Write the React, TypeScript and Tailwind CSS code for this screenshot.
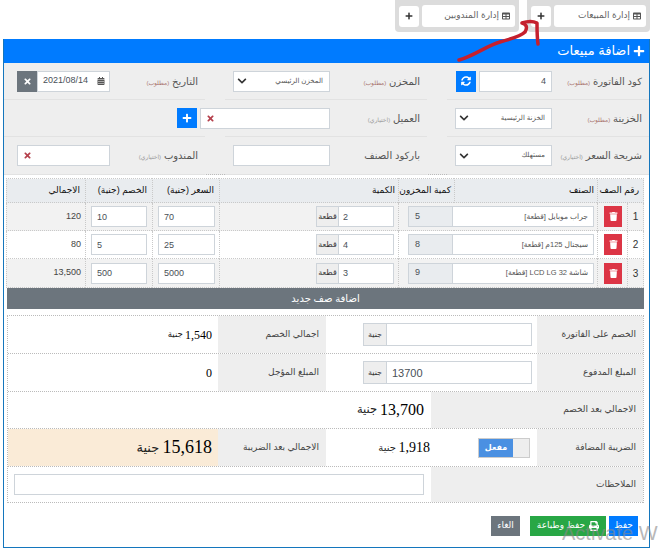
import React from "react";
import { FaPlus, FaSyncAlt, FaTrash, FaTimes, FaCalendarAlt, FaPrint, FaTable, FaChevronDown } from "react-icons/fa";

const inputCls = "h-full min-w-0 bg-white border border-[#ced4da] text-[#495057] outline-none";

function TabGroup({ label, w }: { label: string; w: string }) {
  return (
    <div className={`flex h-[32px] items-center gap-[3px] rounded-b-[4px] bg-[#dcdcdc] px-[4px] ${w}`}>
      <div className="flex h-[22px] flex-1 items-center gap-[3px] rounded-[3px] bg-white pr-[5px] text-[9px] text-[#666]">
        <FaTable className="text-[8px] text-[#555]" />
        <span>{label}</span>
      </div>
      <div className="flex h-[21px] w-[20px] items-center justify-center rounded-[3px] bg-white text-[#333]">
        <FaPlus className="text-[8px]" />
      </div>
    </div>
  );
}

function Label({ text, note, required, narrow }: { text: string; note?: string; required?: boolean; narrow?: boolean }) {
  return (
    <div className={`shrink-0 whitespace-nowrap pr-[7px] text-[10px] text-[#555] ${narrow ? "w-[95px]" : "w-[97px]"}`}>
      {text}{" "}
      {note && <span className={`text-[6px] ${required ? "text-[#a9746e]" : "text-[#999]"}`}>({note})</span>}
    </div>
  );
}

function SelectBox({ text }: { text: string }) {
  return (
    <div className="flex h-[21px] w-[97px] shrink-0 items-center justify-between border border-[#ced4da] bg-white pl-[3px] pr-[6px] text-[7px] text-[#555]">
      <span>{text}</span>
      <FaChevronDown className="text-[10px] text-[#333]" />
    </div>
  );
}

function FormCell({ children, last }: { children: React.ReactNode; last?: boolean }) {
  return (
    <div className={`flex items-center border-b border-[#e2e2e2] ${last ? "" : "ml-[20px]"}`}>{children}</div>
  );
}

function ClearField({ w }: { w: string }) {
  return (
    <div className={`flex h-[21px] shrink-0 items-center justify-end border border-[#ced4da] bg-white pl-[5px] ${w}`}>
      <FaTimes className="text-[9px] text-[#b5404c]" />
    </div>
  );
}

const rows = [
  { n: "1", name: "جراب موبايل [قطعة]", stock: "5", qty: "2", price: "70", disc: "10", total: "120", bg: "bg-[#f2f2f2]", h: "h-[28px]" },
  { n: "2", name: "سيجنال 125م [قطعة]", stock: "8", qty: "4", price: "25", disc: "5", total: "80", bg: "bg-white", h: "h-[28px]" },
  { n: "3", name: "شاشة LCD LG 32 [قطعة]", stock: "9", qty: "3", price: "5000", disc: "500", total: "13,500", bg: "bg-[#f2f2f2]", h: "h-[29px]" },
];

const td = "border border-dotted border-[#c9c9c9] p-0";
const th = "border border-dotted border-[#c9c9c9] pr-[3px] text-right text-[9px] font-normal text-[#111] whitespace-nowrap";
const tableInput = "h-[21px] border border-[#ced4da] bg-white pl-[5px] text-left text-[9px] text-[#495057] outline-none";

function SumLabel({ text, w }: { text: string; w: string }) {
  return (
    <div className={`flex shrink-0 items-center justify-start bg-[#eee] pr-[7px] text-[9px] text-[#444] ${w}`}>{text}</div>
  );
}

function Currency({ value }: { value: string }) {
  return (
    <div className="flex h-[23px] w-[169px] border border-[#ced4da]">
      <input readOnly value={value} dir="ltr" className="h-full min-w-0 flex-1 bg-white pl-[5px] text-left text-[11px] text-[#495057] outline-none" />
      <div className="flex w-[23px] shrink-0 items-center justify-center border-r border-[#ced4da] bg-[#eee] text-[8px] text-[#333]">جنية</div>
    </div>
  );
}

function Money({ value }: { value: string }) {
  return (
    <>
      <span className="whitespace-nowrap">{value}</span>
      <span className="mr-[0.25em] text-[0.72em] text-[#222]">جنية</span>
    </>
  );
}

const serif = "[font-family:'Liberation_Serif','DejaVu_Sans',serif] text-black";
const rowCls = "flex border-b border-dotted border-[#bbb]";

export default function App() {
  return (
    <div dir="rtl" className="relative h-[551px] w-[660px] overflow-hidden bg-white [font-family:'Liberation_Sans','DejaVu_Sans',sans-serif]">
      {/* Top tabs */}
      <div className="flex h-[32px] gap-[8px] pr-[10px]">
        <TabGroup label="إدارة المبيعات" w="w-[123px]" />
        <TabGroup label="إدارة المندوبين" w="w-[124px]" />
      </div>

      {/* Panel */}
      <div className="mr-[10px] mt-[7px] flex h-[509px] w-[647px] flex-col border border-t-0 border-[#1476bd]">
        <div className="flex h-[24px] shrink-0 items-center gap-[3px] bg-[#007bff] pr-[4px] text-[13px] text-white">
          <FaPlus className="text-[12px]" />
          <span>اضافة مبيعات</span>
        </div>

        {/* Form */}
        <div className="grid h-[112px] shrink-0 grid-cols-[222px_222px_201px] grid-rows-[37px_37px_38px] border-b border-dotted border-[#bbb] bg-[#eee]">
          <FormCell>
            <Label text="كود الفاتورة" note="مطلوب" required />
            <div className="flex h-[21px] w-[97px] shrink-0 gap-[3px]">
              <input readOnly value="4" className={`${inputCls} w-[73px] pr-[5px] text-right text-[9px]`} />
              <div className="flex h-full w-[20px] items-center justify-center bg-[#007bff] text-white"><FaSyncAlt className="text-[10px]" /></div>
            </div>
          </FormCell>
          <FormCell>
            <Label text="المخزن" note="مطلوب" required />
            <SelectBox text="المخزن الرئيسي" />
          </FormCell>
          <FormCell last>
            <Label text="التاريخ" note="مطلوب" required narrow />
            <div className="flex h-[21px] w-[93px] shrink-0">
              <div className="flex h-full flex-1 items-center gap-[9px] border border-[#ced4da] bg-white pr-[4px] text-[9px] text-[#495057]">
                <FaCalendarAlt className="text-[8px] text-[#555]" />
                <span dir="ltr">2021/08/14</span>
              </div>
              <div className="flex h-full w-[20px] items-center justify-center bg-[#6c757d] text-white"><FaTimes className="text-[9px]" /></div>
            </div>
          </FormCell>

          <FormCell>
            <Label text="الخزينة" note="مطلوب" required />
            <SelectBox text="الخزنة الرئيسية" />
          </FormCell>
          <FormCell>
            <Label text="العميل" note="اختياري" />
            <div className="flex shrink-0 items-center gap-[3px]">
              <ClearField w="w-[130px]" />
              <div className="flex h-[20px] w-[20px] shrink-0 items-center justify-center bg-[#007bff] text-white"><FaPlus className="text-[10px]" /></div>
            </div>
          </FormCell>
          <FormCell last><div /></FormCell>

          <FormCell>
            <Label text="شريحة السعر" note="اختياري" />
            <SelectBox text="مستهلك" />
          </FormCell>
          <FormCell>
            <Label text="باركود الصنف" />
            <input readOnly className={`${inputCls} !h-[21px] w-[97px] shrink-0`} />
          </FormCell>
          <FormCell last>
            <Label text="المندوب" note="اختياري" narrow />
            <ClearField w="w-[93px]" />
          </FormCell>
        </div>

        {/* Items table */}
        <div className="mr-[5px] mt-[3px] w-[637px] shrink-0">
          <table className="w-[637px] table-fixed border-collapse">
            <colgroup>
              <col className="w-[16px]" />
              <col className="w-[30px]" />
              <col className="w-[143px]" />
              <col className="w-[56px]" />
              <col className="w-[179px]" />
              <col className="w-[67px]" />
              <col className="w-[67px]" />
              <col className="w-[79px]" />
            </colgroup>
            <thead>
              <tr className="h-[24px] bg-[#e9ecef]">
                <th colSpan={2} className={`${th} !pr-[4px]`}>رقم الصف</th>
                <th className={th}>الصنف</th>
                <th className={th}>كمية المخزون</th>
                <th className={th}>الكمية</th>
                <th className={`${th} !pr-[5px]`}>السعر (جنية)</th>
                <th className={`${th} !pr-[5px]`}>الخصم (جنية)</th>
                <th className={th + " !pr-[5px]"}>الاجمالي</th>
              </tr>
            </thead>
            <tbody>
              {rows.map((r) => (
                <tr key={r.n} className={`${r.h} ${r.bg}`}>
                  <td className={`${td} text-center text-[10px] text-[#333]`}>{r.n}</td>
                  <td className={td}>
                    <div className="flex pr-[5px]">
                      <div className="flex h-[21px] w-[18px] items-center justify-center bg-[#dc3545] text-white"><FaTrash className="text-[9px]" /></div>
                    </div>
                  </td>
                  <td colSpan={2} className={td}>
                    <div className="flex h-[21px] pr-[3px]">
                      <div className="flex w-[142px] shrink-0 items-center overflow-hidden whitespace-nowrap border border-[#ced4da] bg-white pr-[5px] text-[7.5px] text-[#555]">{r.name}</div>
                      <div className="flex w-[44px] shrink-0 items-center justify-end border border-r-0 border-[#ced4da] bg-[#e9ecef] pl-[6px] text-[9px] text-[#495057]">{r.stock}</div>
                    </div>
                  </td>
                  <td className={td}>
                    <div className="flex h-[21px] pr-[4px]">
                      <input readOnly dir="ltr" value={r.qty} className="h-full w-[56px] border border-[#ced4da] bg-white pl-[4px] text-left text-[9px] text-[#495057] outline-none" />
                      <div className="flex w-[22px] items-center justify-center border border-r-0 border-[#ced4da] bg-[#eee] text-[8px] text-[#333]">قطعة</div>
                    </div>
                  </td>
                  <td className={td}>
                    <div className="flex pr-[4px]"><input readOnly dir="ltr" value={r.price} className={`${tableInput} w-[57px]`} /></div>
                  </td>
                  <td className={td}>
                    <div className="flex pr-[5px]"><input readOnly dir="ltr" value={r.disc} className={`${tableInput} w-[56px]`} /></div>
                  </td>
                  <td className={`${td} pr-[4px] text-right text-[9px] text-[#444]`}>{r.total}</td>
                </tr>
              ))}
            </tbody>
          </table>
          <div className="flex h-[21px] w-[637px] items-center justify-center bg-[#6c757d] text-[10px] text-white">اضافة صف جديد</div>
        </div>

        {/* Summary */}
        <div className="mr-[5px] mt-[6px] w-[637px] shrink-0 border border-b-0 border-dotted border-[#bbb]">
          <div className={`${rowCls} h-[38px]`}>
            <SumLabel text="الخصم على الفاتورة" w="w-[106px]" />
            <div className="flex w-[211px] items-center pr-[5px]"><Currency value="" /></div>
            <SumLabel text="اجمالي الخصم" w="w-[108px]" />
            <div className={`flex flex-1 items-center pr-[6px] text-[12px] ${serif}`}><Money value="1,540" /></div>
          </div>
          <div className={`${rowCls} h-[38px]`}>
            <SumLabel text="المبلغ المدفوع" w="w-[106px]" />
            <div className="flex w-[211px] items-center pr-[5px]"><Currency value="13700" /></div>
            <SumLabel text="المبلغ المؤجل" w="w-[108px]" />
            <div className={`flex flex-1 items-center pr-[6px] text-[12px] ${serif}`}>0</div>
          </div>
          <div className={`${rowCls} h-[37px]`}>
            <SumLabel text="الاجمالي بعد الخصم" w="w-[212px]" />
            <div className={`flex flex-1 items-center pr-[7px] text-[16px] ${serif}`}><Money value="13,700" /></div>
          </div>
          <div className={`${rowCls} h-[38px]`}>
            <SumLabel text="الضريبة المضافة" w="w-[106px]" />
            <div className="flex w-[211px] items-center gap-[48px] pr-[7px]">
              <div dir="ltr" className="flex h-[20px] w-[52px] shrink-0 border border-[#ccc]">
                <div className="flex w-[34px] items-center justify-center bg-[#4a90e2] text-[8px] font-bold text-white">مفعل</div>
                <div className="flex-1 bg-[#eee]" />
              </div>
              <div className={`flex items-center whitespace-nowrap text-[14px] ${serif}`}><Money value="1,918" /></div>
            </div>
            <SumLabel text="الاجمالي بعد الضريبة" w="w-[108px]" />
            <div className={`flex flex-1 items-center bg-[#faebd7] pr-[6px] text-[18px] ${serif}`}><Money value="15,618" /></div>
          </div>
          <div className={`${rowCls} h-[36px]`}>
            <SumLabel text="الملاحظات" w="w-[212px]" />
            <div className="flex flex-1 items-center pr-[7px]">
              <input readOnly className="h-[21px] w-[410px] border border-[#ced4da] bg-white outline-none" />
            </div>
          </div>
        </div>

        {/* Actions */}
        <div className="mt-[13px] flex h-[20px] shrink-0 pr-[11px] text-[9px] text-white">
          <div className="flex w-[29px] items-center justify-center bg-[#007bff]">حفظ</div>
          <div className="mr-[3px] flex w-[76px] items-center justify-center gap-[4px] bg-[#28a745]">
            <FaPrint className="text-[10px]" />
            <span>حفظ وطباعة</span>
          </div>
          <div className="mr-[10px] flex w-[29px] items-center justify-center bg-[#6c757d]">الغاء</div>
        </div>
      </div>

      {/* Red hand-drawn arrow over the page */}
      <svg className="pointer-events-none absolute left-0 top-0" width="660" height="80" viewBox="0 0 660 80" fill="none">
        <path d="M459 60 C474 56 486 46 500 42 C510 39 520 37 525 32 C528 27 526 24 522 23 C528 21 533 21 537 23 C537 30 537 37 538 44" stroke="#c5202e" strokeWidth="3.5" strokeLinecap="round" strokeLinejoin="round" />
      </svg>

      {/* Watermark */}
      <div dir="ltr" className="absolute left-[562px] top-[518px] whitespace-nowrap text-[20px] text-[#8a8a8a] opacity-60">Activate W</div>
    </div>
  );
}
